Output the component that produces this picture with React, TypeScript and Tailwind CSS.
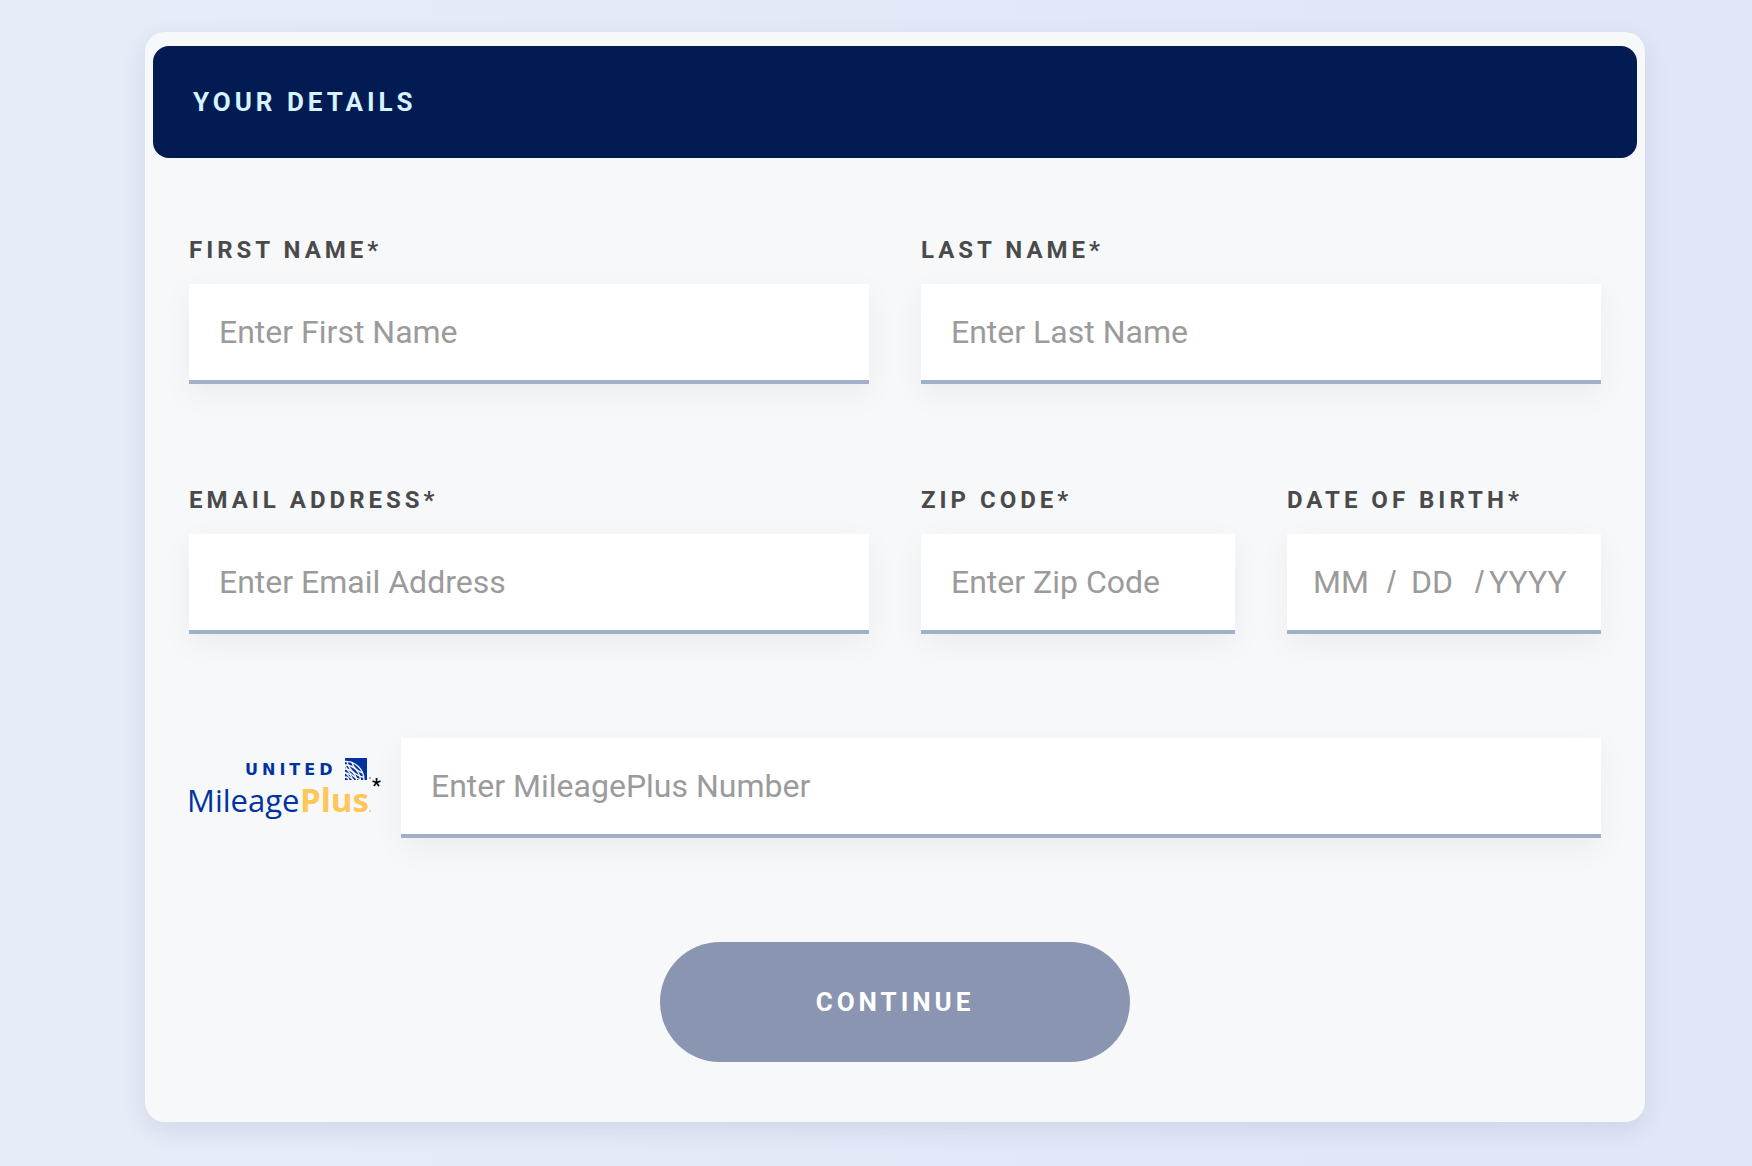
import { type ReactNode } from 'react';

const inputClass =
  'block h-[100px] w-full border-b-4 border-[#a0b0c9] bg-white px-[30px] text-[32px] text-[#4a4a4a] shadow-[0_10px_30px_rgba(0,0,0,0.05)] outline-none placeholder:text-[#9b9b9b]';
const partClass =
  'min-w-0 bg-transparent text-[32px] text-[#4a4a4a] outline-none placeholder:text-[#9b9b9b]';

function Label({ htmlFor, children }: { htmlFor: string; children: ReactNode }) {
  return (
    <label
      htmlFor={htmlFor}
      className="mb-[18px] block text-[24px] leading-8 font-bold tracking-[4px] whitespace-nowrap text-[#4a4a4a] uppercase"
    >
      {children}
    </label>
  );
}

function Field({ id, label, placeholder, type = 'text' }: { id: string; label: string; placeholder: string; type?: string }) {
  return (
    <div className="min-w-0">
      <Label htmlFor={id}>{label}</Label>
      <input id={id} type={type} placeholder={placeholder} className={inputClass} />
    </div>
  );
}

function BirthDateField() {
  return (
    <div className="min-w-0">
      <Label htmlFor="birth-month">Date of Birth*</Label>
      <div className="flex h-[100px] items-center border-b-4 border-[#a0b0c9] bg-white pr-4 pl-[26px] text-[32px] text-[#9b9b9b] shadow-[0_10px_30px_rgba(0,0,0,0.05)]">
        <input id="birth-month" placeholder="MM" maxLength={2} className={`${partClass} w-[74px]`} />
        <span className="w-6 font-['Liberation_Sans',sans-serif]">/</span>
        <input aria-label="Day" placeholder="DD" maxLength={2} className={`${partClass} w-16`} />
        <span className="w-[14px] font-['Liberation_Sans',sans-serif]">/</span>
        <input aria-label="Year" placeholder="YYYY" maxLength={4} className={`${partClass} flex-1`} />
      </div>
    </div>
  );
}

function MileagePlusLogo() {
  return (
    <svg width="187" height="68" viewBox="-4 -2 187 68" className="-ml-1 shrink-0" aria-hidden="true">
      <text x="56" y="19" fill="#0033a0" fontSize="16" fontWeight="700" letterSpacing="4" fontFamily="DejaVu Sans, sans-serif">
        UNITED
      </text>
      <g transform="translate(156 2)">
        <rect width="22" height="22" fill="#0033a0" />
        <g fill="none" stroke="#f7f8fa" strokeWidth="1.3">
          {/* meridians */}
          <path d="M0 3.5C10 3 19 11 19 22" />
          <path d="M0 7C8 7 14.5 13 15.5 22" />
          <path d="M0 11C6 11 11 16 11.5 22" />
          <path d="M0 15C4 15 7 18 7.5 22" />
          <path d="M0 19C2 19 3.5 20 4 22" />
          {/* parallels */}
          <path d="M2 3.5C3 10 9 17 19 19.5" />
          <path d="M7 4.5C8 9 12 13 17.5 15" />
          <path d="M0 7C2 13 8 19 15.5 22" />
          <path d="M0 14C2 17 5 20 9 22" />
        </g>
      </g>
      <text x="-2" y="56" fill="#0033a0" fontSize="31" fontWeight="500" fontFamily="Open Sans, sans-serif">
        Mileage
      </text>
      <text x="111" y="56" fill="#ffc658" fontSize="33" fontWeight="700" fontFamily="Open Sans, sans-serif">
        Plus
      </text>
      <circle cx="181" cy="55" r="1" fill="#ffc658" />
      <circle cx="181" cy="22" r="1" fill="#0033a0" opacity="0.5" />
    </svg>
  );
}

export default function App() {
  return (
    <div className="min-h-screen bg-linear-to-r from-[#e6ecf8] to-[#e1e6f8] pt-8 pr-[107px] pb-11 pl-[145px] font-['Roboto',sans-serif]">
      <form className="rounded-[20px] bg-[#f7f8fa] px-2 pt-[14px] pb-[60px] shadow-[0_8px_24px_rgba(40,50,90,0.1)]" onSubmit={(e) => e.preventDefault()}>
        <h2 className="flex h-28 items-center rounded-2xl bg-[#021b53] px-10 text-[26px] font-bold tracking-[4px] text-[#d6f3ff] uppercase">
          Your Details
        </h2>

        <div className="px-9 pt-[76px]">
          <div className="grid grid-cols-2 gap-x-[52px]">
            <Field id="first-name" label="First Name*" placeholder="Enter First Name" />
            <Field id="last-name" label="Last Name*" placeholder="Enter Last Name" />
          </div>

          <div className="mt-[100px] grid grid-cols-2 gap-x-[52px]">
            <Field id="email" label="Email Address*" placeholder="Enter Email Address" type="email" />
            <div className="grid grid-cols-2 gap-x-[52px]">
              <Field id="zip" label="Zip Code*" placeholder="Enter Zip Code" />
              <BirthDateField />
            </div>
          </div>

          <div className="mt-[104px] flex items-center">
            <label htmlFor="mileage-number" className="flex w-[212px] shrink-0 text-[20px] leading-8 font-medium text-black" aria-label="MileagePlus number">
              <MileagePlusLogo />
              <span className="pt-4">*</span>
            </label>
            <input id="mileage-number" placeholder="Enter MileagePlus Number" className={inputClass} />
          </div>

          <div className="mt-[104px] flex justify-center">
            <button
              type="submit"
              className="h-[120px] w-[470px] rounded-full bg-[#8a95b1] text-[26px] font-bold tracking-[4px] text-white uppercase"
            >
              Continue
            </button>
          </div>
        </div>
      </form>
    </div>
  );
}
